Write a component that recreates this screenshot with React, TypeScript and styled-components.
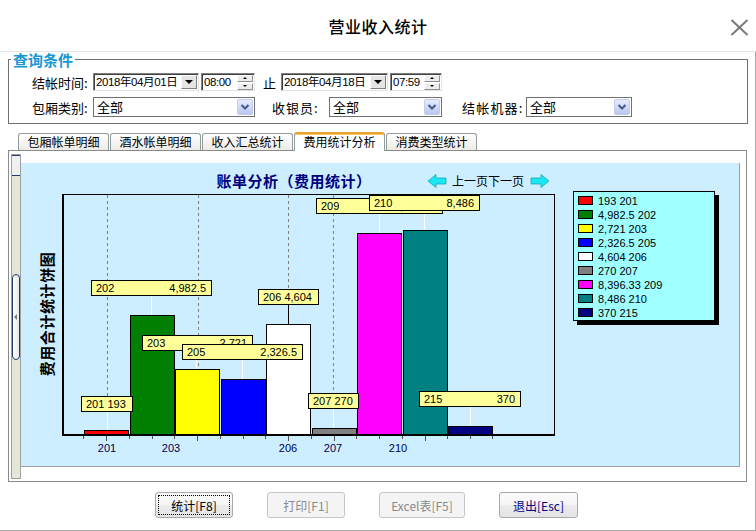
import React from 'react';
import styled, { createGlobalStyle, css } from 'styled-components';

const CJK = '"Noto Sans CJK SC", "Liberation Sans", sans-serif';
const NUM = '"Liberation Sans", "Noto Sans CJK SC", sans-serif';

const GlobalStyle = createGlobalStyle`
  html, body { margin: 0; padding: 0; background: #fff; }
  body { font-family: ${CJK}; font-size: 12px; color: #000; }
  * { box-sizing: border-box; }
`;

const Window = styled.div`
  width: 756px;
  height: 531px;
  background: #fff;
  display: flex;
  flex-direction: column;
  overflow: hidden;
`;

const TitleBar = styled.div`
  flex: none;
  height: 52px;
  border-bottom: 1px solid #e4e4e4;
  display: grid;
  grid-template-columns: 1fr auto 1fr;
  align-items: center;
`;

const Title = styled.div`
  grid-column: 2;
  font-size: 16px;
  font-weight: 500;
  letter-spacing: 0.5px;
`;

const CloseButton = styled.button`
  justify-self: end;
  margin-right: 7px;
  margin-top: 3px;
  width: 19px;
  height: 17px;
  padding: 0;
  border: none;
  background: none;
  display: flex;
  align-items: center;
  justify-content: center;
`;

const Body = styled.div`
  flex: 1;
  display: flex;
  flex-direction: column;
  border-right: 1px solid #a8a8a8;
  border-bottom: 1px solid #a8a8a8;
`;

const Group = styled.fieldset`
  margin: 0 7px 0 8px;
  padding: 0;
  min-width: 0;
  border: 1px solid #707070;
`;

const GroupLegend = styled.legend`
  margin-left: 2px;
  padding: 0 2px;
  font-size: 15px;
  line-height: 15px;
  font-weight: bold;
  color: #1597d4;
`;

const GroupBody = styled.div`
  padding: 6px 0 6px 23px;
  display: flex;
  flex-direction: column;
  gap: 6px;
`;

const Row = styled.div<{ $h: number }>`
  display: flex;
  align-items: center;
  height: ${(p) => p.$h}px;
`;

const FieldLabel = styled.span<{ $w: number; $ml?: number; $ls?: number }>`
  flex: none;
  width: ${(p) => p.$w}px;
  margin-left: ${(p) => p.$ml ?? 0}px;
  letter-spacing: ${(p) => p.$ls ?? 0}px;
  font-size: 13px;
  white-space: nowrap;
`;

const Sep = styled.span`
  margin: 0 5px 0 8px;
  font-size: 13px;
`;

const Sunken = styled.div<{ $w: number; $ml?: number }>`
  flex: none;
  display: flex;
  align-items: center;
  width: ${(p) => p.$w}px;
  margin-left: ${(p) => p.$ml ?? 0}px;
  height: 18px;
  background: #fff;
  border: 1px solid;
  border-color: #808080 #e2e2e2 #e2e2e2 #808080;
  box-shadow: inset 1px 1px 0 #404040;
  padding: 0 1px 0 2px;
`;

const FieldText = styled.span`
  flex: 1;
  min-width: 0;
  font-family: ${NUM};
  font-size: 11.5px;
  letter-spacing: -0.4px;
  line-height: 14px;
  white-space: nowrap;
`;

const DropBtn = styled.span`
  flex: none;
  width: 16px;
  height: 14px;
  background: #e4e4e4;
  border: 1px solid;
  border-color: #fff #808080 #808080 #fff;
  display: flex;
  align-items: center;
  justify-content: center;
  &::before {
    content: '';
    border-left: 4px solid transparent;
    border-right: 4px solid transparent;
    border-top: 4px solid #000;
  }
`;

const Spinner = styled.span`
  flex: none;
  display: flex;
  flex-direction: column;
  gap: 1px;
  width: 16px;
`;

const SpinBtn = styled.span<{ $up?: boolean }>`
  height: 7px;
  background: #ececec;
  border: 1px solid;
  border-color: #fff #909090 #909090 #fff;
  display: flex;
  align-items: center;
  justify-content: center;
  &::before {
    content: '';
    border-left: 2px solid transparent;
    border-right: 2px solid transparent;
    ${(p) => (p.$up ? 'border-bottom: 2px solid #000;' : 'border-top: 2px solid #000;')}
  }
`;

const Combo = styled.div<{ $w: number }>`
  flex: none;
  display: flex;
  align-items: center;
  width: ${(p) => p.$w}px;
  height: 20px;
  border: 1px solid #707070;
  background: #fff;
  padding-left: 3px;
`;

const ComboText = styled.span`
  flex: 1;
  font-size: 13px;
  line-height: 16px;
`;

const ComboBtn = styled.span`
  flex: none;
  width: 16px;
  height: 16px;
  margin-right: 1px;
  border-radius: 2px;
  border: 1px solid #c4cbe9;
  background: linear-gradient(#e6ebff, #bcc7f1);
  display: flex;
  align-items: center;
  justify-content: center;
`;

const TabStrip = styled.div`
  display: flex;
  align-items: flex-end;
  gap: 1px;
  height: 18px;
  margin: 8px 0 0 18px;
  position: relative;
  z-index: 1;
`;

const Tab = styled.div<{ $active?: boolean }>`
  width: 91px;
  height: 17px;
  border: 1px solid #919b9c;
  border-bottom: none;
  border-radius: 3px 3px 0 0;
  background: linear-gradient(#ffffff, #ecebe6);
  font-size: 12px;
  line-height: 15px;
  text-align: center;
  ${(p) =>
    p.$active &&
    css`
      height: 19px;
      margin-bottom: -1px;
      background: #fff;
      border-top: 2px solid #e8a030;
      box-shadow: inset 0 1px 0 #ffc862;
      line-height: 16px;
    `}
`;

const Panel = styled.div`
  flex: none;
  height: 332px;
  margin: 0 8px;
  border: 1px solid #8a8a8a;
  background: #fff;
  display: flex;
  padding: 3px 0 2px 2px;
`;

const ScrollBar = styled.div`
  flex: none;
  width: 10px;
  border: 1px solid #a0a0a0;
  background: #e6e6d6;
  display: flex;
  flex-direction: column;
`;

const ScrollCap = styled.div`
  height: 21px;
  background: #f0f0f0;
  border-top: 1px solid #1c3f6e;
  border-bottom: 1px solid #1c3f6e;
`;

const ScrollThumb = styled.div`
  margin-top: 98px;
  height: 86px;
  border: 1px solid #1c3f6e;
  border-radius: 4px;
  background: linear-gradient(90deg, #ffffff, #e9e9e9);
  display: flex;
  align-items: center;
  padding-left: 1px;
  &::before {
    content: '';
    border-top: 3px solid transparent;
    border-bottom: 3px solid transparent;
    border-right: 3px solid #7a7a7a;
  }
`;

const ChartColumn = styled.div`
  flex: 1;
  padding: 9px 6px 0 0;
`;

const ChartArea = styled.div`
  height: 304px;
  background: #cceeff;
  border-right: 1px solid #a0a0a0;
  border-bottom: 1px solid #a0a0a0;
`;

const ChartSvg = styled.svg`
  display: block;
`;

const ChartTitle = styled.text`
  font-family: ${CJK};
  font-size: 15px;
  font-weight: bold;
  letter-spacing: 0.5px;
  fill: #000080;
`;

const NavText = styled.text`
  font-family: ${CJK};
  font-size: 12px;
  fill: #000;
`;

const AxisTitle = styled.text`
  font-family: ${CJK};
  font-size: 15px;
  font-weight: bold;
  letter-spacing: 0.6px;
  fill: #000;
`;

const NumText = styled.text<{ $fill?: string }>`
  font-family: ${NUM};
  font-size: 11px;
  fill: ${(p) => p.$fill ?? '#000'};
`;

const ButtonRow = styled.div`
  display: flex;
  gap: 34px;
  padding: 10px 0 0 155px;
`;

const ActionButton = styled.button<{ $w: number; $focus?: boolean; $navy?: boolean }>`
  width: ${(p) => p.$w}px;
  height: 26px;
  padding: 0;
  border: 1px solid #a9a9a9;
  border-radius: 3px;
  background: linear-gradient(#fbfbfb 0%, #f5f5f5 48%, #ebebeb 52%, #e4e4e4 100%);
  font-family: ${CJK};
  font-size: 12px;
  color: ${(p) => (p.$navy ? '#000080' : '#000')};
  ${(p) =>
    p.$focus &&
    css`
      outline: 1px dotted #000;
      outline-offset: -4px;
    `}
  &:disabled {
    border-color: #c6c6c6;
    background: #f4f4f4;
    color: #8a8a8a;
  }
`;

type Bar = { id: string; v: number; c: string; val: string };
const bars: Bar[] = [
  { id: '201', v: 193, c: '#ff0000', val: '193' },
  { id: '202', v: 4982.5, c: '#008000', val: '4,982.5' },
  { id: '203', v: 2721, c: '#ffff00', val: '2,721' },
  { id: '205', v: 2326.5, c: '#0000ff', val: '2,326.5' },
  { id: '206', v: 4604, c: '#ffffff', val: '4,604' },
  { id: '207', v: 270, c: '#808080', val: '270' },
  { id: '209', v: 8396.33, c: '#ff00ff', val: '8,396.33' },
  { id: '210', v: 8486, c: '#008080', val: '8,486' },
  { id: '215', v: 370, c: '#000080', val: '370' },
];

type Tag = { x: number; y: number; w: number; l: string; r?: string; cx: number; to: number; lc: string };
const tags: Tag[] = [
  { x: 81, y: 396, w: 51, l: '201 193', cx: 107, to: 430, lc: '#fff' },
  { x: 91, y: 280, w: 120, l: '202', r: '4,982.5', cx: 151, to: 315, lc: '#fff' },
  { x: 142, y: 335, w: 110, l: '203', r: '2,721', cx: 196, to: 369, lc: '#fff' },
  { x: 182, y: 344, w: 120, l: '205', r: '2,326.5', cx: 242, to: 379, lc: '#fff' },
  { x: 258, y: 289, w: 60, l: '206 4,604', cx: 288, to: 324, lc: '#000' },
  { x: 308, y: 393, w: 50, l: '207 270', cx: 333, to: 428, lc: '#fff' },
  { x: 316, y: 198, w: 126, l: '209', r: '8,396.33', cx: 379, to: 233, lc: '#fff' },
  { x: 369, y: 195, w: 110, l: '210', r: '8,486', cx: 424, to: 230, lc: '#fff' },
  { x: 419, y: 391, w: 101, l: '215', r: '370', cx: 470, to: 426, lc: '#fff' },
];

const xLabels = [
  { x: 107, t: '201' },
  { x: 171, t: '203' },
  { x: 288, t: '206' },
  { x: 333, t: '207' },
  { x: 398, t: '210' },
];

const grid = [107, 198, 288, 333, 424];
const barX = (i: number) => 84 + i * 45.5;
const barTop = (v: number) => Math.round(435 - (v * 241) / 10000);

function Chart() {
  const ticks: { x: number; long: boolean }[] = [];
  bars.forEach((_, i) => {
    ticks.push({ x: Math.round(barX(i)) - 0.5, long: false });
    ticks.push({ x: Math.round(barX(i) + 22) + 0.5, long: [0, 2, 4, 5, 7].includes(i) });
  });
  ticks.push({ x: Math.round(barX(8) + 44) + 0.5, long: false });

  return (
    <ChartSvg width={718} height={303} viewBox="21 163 718 303">
      <ChartTitle x={294} y={187} textAnchor="middle">
        账单分析（费用统计）
      </ChartTitle>
      <polygon
        points="428,181 436,174.5 436,178 446,178 446,184 436,184 436,187.5"
        fill="#1ce6f2"
        stroke="#0a9fb0"
        strokeWidth={0.7}
      />
      <NavText x={452} y={186}>
        上一页下一页
      </NavText>
      <polygon
        points="549,181 541,174.5 541,178 531,178 531,184 541,184 541,187.5"
        fill="#1ce6f2"
        stroke="#0a9fb0"
        strokeWidth={0.7}
      />
      <AxisTitle transform="translate(46 314) rotate(-90)" textAnchor="middle" dominantBaseline="central">
        费用合计统计饼图
      </AxisTitle>

      {grid.map((g) => (
        <line key={g} x1={g + 0.5} x2={g + 0.5} y1={195} y2={434} stroke="#808080" strokeDasharray="3 3" />
      ))}

      {bars.map((b, i) => {
        const top = barTop(b.v);
        return (
          <rect
            key={b.id}
            x={Math.round(barX(i)) + 0.5}
            y={top + 0.5}
            width={44}
            height={434 - top}
            fill={b.c}
            stroke="#000"
          />
        );
      })}

      <rect x={62.5} y={194.5} width={492} height={240} fill="none" stroke="#000" />
      <rect x={62} y={194} width={2} height={242} fill="#000" />
      <rect x={62} y={434} width={493} height={2} fill="#000" />

      {ticks.map((t, i) => (
        <line key={i} x1={t.x} x2={t.x} y1={436} y2={t.long ? 441 : 439} stroke="#505050" />
      ))}

      {xLabels.map((l) => (
        <NumText key={l.t} x={l.x} y={452} textAnchor="middle" $fill="#000050">
          {l.t}
        </NumText>
      ))}

      {tags.map((t) => (
        <line key={'l' + t.l} x1={t.cx + 0.5} x2={t.cx + 0.5} y1={t.y + 16} y2={t.to} stroke={t.lc} />
      ))}

      {tags.map((t) => (
        <g key={'t' + t.l}>
          <rect x={t.x + 0.5} y={t.y + 0.5} width={t.w} height={15} fill="#ffff99" stroke="#000" />
          <NumText x={t.x + 5} y={t.y + 12}>
            {t.l}
          </NumText>
          {t.r && (
            <NumText x={t.x + t.w - 5} y={t.y + 12} textAnchor="end">
              {t.r}
            </NumText>
          )}
        </g>
      ))}

      <rect x={577} y={195} width={142} height={130} fill="#000" />
      <rect x={573.5} y={191.5} width={141} height={129} fill="#a0ffff" stroke="#000" />
      {bars.map((b, i) => (
        <g key={'lg' + b.id}>
          <rect x={578.5} y={196.5 + i * 14} width={14} height={8} fill={b.c} stroke="#000" />
          <NumText x={598} y={204.5 + i * 14}>
            {b.val} {b.id}
          </NumText>
        </g>
      ))}
    </ChartSvg>
  );
}

function DateBox({ w, ml, text }: { w: number; ml?: number; text: string }) {
  return (
    <Sunken $w={w} $ml={ml}>
      <FieldText>{text}</FieldText>
      <DropBtn />
    </Sunken>
  );
}

function TimeBox({ w, ml, text }: { w: number; ml?: number; text: string }) {
  return (
    <Sunken $w={w} $ml={ml}>
      <FieldText>{text}</FieldText>
      <Spinner>
        <SpinBtn $up />
        <SpinBtn />
      </Spinner>
    </Sunken>
  );
}

function ComboBox({ w, text }: { w: number; text: string }) {
  return (
    <Combo $w={w}>
      <ComboText>{text}</ComboText>
      <ComboBtn>
        <svg width="10" height="8" viewBox="0 0 10 8">
          <path d="M1.5 2 L5 5.5 L8.5 2" fill="none" stroke="#3f5a8a" strokeWidth="2" />
        </svg>
      </ComboBtn>
    </Combo>
  );
}

const tabNames = ['包厢帐单明细', '酒水帐单明细', '收入汇总统计', '费用统计分析', '消费类型统计'];

export default function App() {
  return (
    <>
      <GlobalStyle />
      <Window>
        <TitleBar>
          <Title>营业收入统计</Title>
          <CloseButton aria-label="close">
            <svg width="19" height="17" viewBox="0 0 19 17">
              <path d="M1.5 1 L17.5 16 M17.5 1 L1.5 16" stroke="#7a7a7a" strokeWidth="2" />
            </svg>
          </CloseButton>
        </TitleBar>
        <Body>
          <Group>
            <GroupLegend>查询条件</GroupLegend>
            <GroupBody>
              <Row $h={18}>
                <FieldLabel $w={61}>结帐时间:</FieldLabel>
                <DateBox w={106} text="2018年04月01日" />
                <TimeBox w={54} ml={2} text="08:00" />
                <Sep>止</Sep>
                <DateBox w={107} text="2018年04月18日" />
                <TimeBox w={52} ml={2} text="07:59" />
              </Row>
              <Row $h={20}>
                <FieldLabel $w={61}>包厢类别:</FieldLabel>
                <ComboBox w={162} text="全部" />
                <FieldLabel $w={57} $ml={17} $ls={1}>收银员:</FieldLabel>
                <ComboBox w={113} text="全部" />
                <FieldLabel $w={64} $ml={20} $ls={1.2}>结帐机器:</FieldLabel>
                <ComboBox w={106} text="全部" />
              </Row>
            </GroupBody>
          </Group>
          <TabStrip>
            {tabNames.map((n, i) => (
              <Tab key={n} $active={i === 3}>
                {n}
              </Tab>
            ))}
          </TabStrip>
          <Panel>
            <ScrollBar>
              <ScrollCap />
              <ScrollThumb />
            </ScrollBar>
            <ChartColumn>
              <ChartArea>
                <Chart />
              </ChartArea>
            </ChartColumn>
          </Panel>
          <ButtonRow>
            <ActionButton $w={78} $focus>
              统计[F8]
            </ActionButton>
            <ActionButton $w={78} disabled>
              打印[F1]
            </ActionButton>
            <ActionButton $w={86} disabled>
              Excel表[F5]
            </ActionButton>
            <ActionButton $w={79} $navy>
              退出[Esc]
            </ActionButton>
          </ButtonRow>
        </Body>
      </Window>
    </>
  );
}
